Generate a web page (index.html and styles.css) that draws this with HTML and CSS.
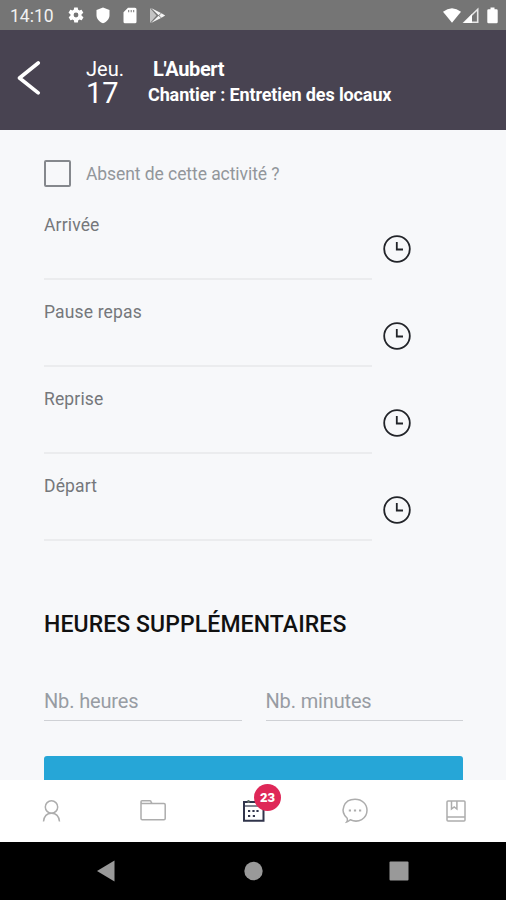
FILE: index.html
```html
<!DOCTYPE html>
<html lang="fr">
<head>
  <meta charset="UTF-8">
  <meta name="viewport" content="width=device-width, initial-scale=1.0">
  <title>Chantier : Entretien des locaux</title>
  <link rel="stylesheet" href="styles.css">
</head>
<body>
  <!-- Status bar -->
  <div class="status-bar">
    <span class="status-time">14:10</span>
    <svg class="status-gear" width="18" height="18" viewBox="0 0 24 24"><path fill="#fff" fill-rule="evenodd" d="M19.4 13a7.500 7.500 0 0 0 0-2l2.100-1.600c.2-.2.2-.4.1-.7l-2-3.400c-.1-.2-.4-.3-.6-.2l-2.500 1a7.300 7.300 0 0 0-1.700-1l-.4-2.600c0-.3-.2-.5-.5-.5h-4c-.2 0-.4.2-.5.500l-.4 2.600c-.6.300-1.200.6-1.700 1l-2.500-1c-.2-.1-.5 0-.6.200l-2 3.400c-.1.300 0 .5.100.7L4.600 11a7.500 7.500 0 0 0 0 2l-2.100 1.600c-.2.200-.2.400-.1.700l2 3.400c.1.200.4.300.6.200l2.500-1c.5.400 1.100.7 1.700 1l.4 2.600c.1.300.3.500.5.500h4c.3 0 .5-.2.5-.5l.4-2.600c.6-.3 1.200-.6 1.700-1l2.500 1c.2.100.5 0 .6-.2l2-3.400c.1-.3.100-.5-.1-.7zM12 15.200a3.200 3.200 0 1 1 0-6.400 3.200 3.200 0 0 1 0 6.400z"/></svg>
    <svg class="status-shield" width="14" height="17" viewBox="0 0 14 17"><path fill="#fff" d="M7 .5l6.500 2.400v5c0 3.800-2.700 7-6.500 8.300C3.200 14.900.5 11.700.5 7.900v-5z"/></svg>
    <svg class="status-card" width="14" height="17" viewBox="0 0 14 17"><path fill="#fff" fill-rule="evenodd" d="M5 .8h7q1.500 0 1.500 1.500v12.400q0 1.500-1.500 1.500H2Q.5 16.200.5 14.700V5.300zM5.200 3v2.200h1V3zm2.500 0v2.200h1V3zm2.500 0v2.200h1V3z"/></svg>
    <svg class="status-play" width="17" height="17" viewBox="0 0 17 17"><path fill="#c4c4c4" d="M1 1v15l6.500-7.500z"/><path fill="#f4f4f4" d="M2 1l10 5-2.500 2.200zM2 16l10-5-2.500-2.200zM12.500 6.300L16.200 8.500l-3.700 2.200-2.300-2.200z"/></svg>
    <div class="status-right">
      <svg width="20" height="17" viewBox="0 0 20 17"><path fill="#fff" d="M1 4.800Q10-2.500 19 4.800l-9 11z"/></svg>
      <svg width="18" height="17" viewBox="0 0 18 17"><path fill="none" stroke="#e8e8e8" stroke-width="1.600" d="M15.700 2.300v12.900H2.500z"/><path fill="#fff" d="M1.500 16L10 7V16z"/></svg>
      <svg class="status-battery" width="11" height="17" viewBox="0 0 11 17"><path fill="#fff" d="M3.500.5h4v1.800h2q1.200 0 1.200 1.200v11.600q0 1.200-1.200 1.200h-8Q.3 16.300.3 15.100V3.500q0-1.200 1.200-1.200h2z"/></svg>
    </div>
  </div>

  <!-- Header -->
  <header class="header">
    <a class="back" href="#" aria-label="Retour">
      <svg width="24" height="36" viewBox="0 0 24 36"><path d="M21.200 3L2.500 18l18.700 14.800" fill="none" stroke="#fff" stroke-width="3.600" stroke-linecap="round" stroke-linejoin="round"/></svg>
    </a>
    <div class="date">
      <span class="date-day">Jeu.</span>
      <span class="date-number">17</span>
    </div>
    <div class="site">
      <h1 class="site-name">L'Aubert</h1>
      <p class="site-task">Chantier : Entretien des locaux</p>
    </div>
  </header>

  <!-- Form -->
  <main class="content">
    <label class="absent">
      <input type="checkbox" class="absent-box">
      <span>Absent de cette activité ?</span>
    </label>

    <div class="time-row">
      <div class="time-field">Arrivée</div>
      <svg class="clock" width="30" height="30" viewBox="0 0 30 30"><circle cx="15" cy="15" r="12.800"/><path d="M14.800 8v7.500H21"/></svg>
    </div>
    <div class="time-row">
      <div class="time-field">Pause repas</div>
      <svg class="clock" width="30" height="30" viewBox="0 0 30 30"><circle cx="15" cy="15" r="12.800"/><path d="M14.800 8v7.500H21"/></svg>
    </div>
    <div class="time-row">
      <div class="time-field">Reprise</div>
      <svg class="clock" width="30" height="30" viewBox="0 0 30 30"><circle cx="15" cy="15" r="12.800"/><path d="M14.800 8v7.500H21"/></svg>
    </div>
    <div class="time-row">
      <div class="time-field">Départ</div>
      <svg class="clock" width="30" height="30" viewBox="0 0 30 30"><circle cx="15" cy="15" r="12.800"/><path d="M14.800 8v7.500H21"/></svg>
    </div>

    <h2 class="section-title">HEURES SUPPLÉMENTAIRES</h2>
    <div class="extra">
      <input class="extra-input" type="text" placeholder="Nb. heures">
      <input class="extra-input" type="text" placeholder="Nb. minutes">
    </div>
    <button class="submit" aria-label="Valider"></button>
  </main>

  <!-- Tabs -->
  <nav class="tabs">
    <a class="tab" href="#" aria-label="Profil">
      <svg width="30" height="30" viewBox="0 0 30 30"><circle cx="14.500" cy="11" r="6.200"/><path d="M6.500 25.500c.5-5 3.500-8.300 8-8.300s7.500 3.300 8 8.300"/></svg>
    </a>
    <a class="tab" href="#" aria-label="Dossiers">
      <svg width="30" height="30" viewBox="0 0 30 30"><path d="M3 8V5.800q0-1 1-1h8q1 0 1 1l1 1.700h12q1.200 0 1.200 1.200v13.800q0 1.200-1.200 1.200H4.200Q3 23.700 3 22.500V8q0-.5 1-.5h10"/></svg>
    </a>
    <a class="tab tab-active" href="#" aria-label="Planning">
      <svg width="30" height="30" viewBox="0 0 30 30"><path d="M5 6h19.500v18.800H5z"/><path d="M5 10h19.500" stroke-width="1.200"/><path d="M9.500 4v3M20.500 4v3" stroke="#65716d"/><path d="M9 15h2.200m2.200 0h2.200m1.800 0h2.200M9 20h2.200m2.600 0H16" stroke-width="2"/></svg>
      <span class="badge">23</span>
    </a>
    <a class="tab" href="#" aria-label="Messages">
      <svg width="30" height="30" viewBox="0 0 30 30"><path d="M7.200 22.200C-.5 15.500 3.500 3.300 15 3.300c7.200 0 12 4.900 12 11 0 8.300-8.500 13.200-16.700 9.500-.9.900-2.100 1.900-3.600 2.200.8-1 1-2.300.5-3.800z"/><path d="M8.800 14.500H11m2.900 0h2.200m2.900 0h2.200" stroke-width="1.800"/></svg>
    </a>
    <a class="tab" href="#" aria-label="Journal">
      <svg width="30" height="30" viewBox="0 0 30 30"><rect x="6" y="5" width="18" height="20" rx="1"/><path d="M6 21h18M10.500 5v8l2.700-2 2.700 2V5"/></svg>
    </a>
  </nav>

  <!-- System navigation -->
  <div class="system-nav">
    <svg width="20" height="24" viewBox="0 0 20 24"><path d="M17.500 1.500v21L0 12z"/></svg>
    <svg width="20" height="24" viewBox="0 0 20 24"><circle cx="10.500" cy="12" r="9.200"/></svg>
    <svg width="20" height="24" viewBox="0 0 20 24"><rect x=".5" y="2.500" width="19" height="19" rx="1"/></svg>
  </div>
</body>
</html>
```
FILE: styles.css
```css
* {
  box-sizing: border-box;
}

body {
  margin: 0;
  width: 506px;
  height: 900px;
  display: flex;
  flex-direction: column;
  overflow: hidden;
  background-color: #f7f8fa;
  font-family: Roboto, "Liberation Sans", sans-serif;
}

.status-bar {
  height: 30px;
  flex: none;
  display: flex;
  align-items: center;
  padding: 0 8px 0 10px;
  background-color: #757575;
  color: #f1f1f1;
}

.status-time {
  width: 57px;
  padding-top: 1px;
  font-size: 17.5px;
}

.status-shield {
  margin-left: 11px;
}

.status-card {
  margin-left: 13px;
}

.status-play {
  margin-left: 12px;
}

.status-right {
  display: flex;
  align-items: center;
  margin-left: auto;
}

.status-battery {
  margin-left: 7px;
}

.header {
  height: 100px;
  flex: none;
  display: flex;
  background-color: #484351;
  color: #fff;
}

.back {
  width: 86px;
  padding: 30px 0 0 17px;
}

.date {
  width: 62px;
  padding-top: 27px;
}

.date-day,
.date-number {
  display: block;
}

.date-day {
  font-size: 20px;
  line-height: 24px;
}

.date-number {
  font-size: 29px;
  line-height: 24px;
}

.site {
  padding-top: 27px;
}

.site-name {
  margin: 0 0 0 5px;
  font-size: 20px;
  line-height: 24px;
  font-weight: 700;
  letter-spacing: -0.35px;
}

.site-task {
  margin: 2px 0 0;
  font-size: 18px;
  line-height: 24px;
  font-weight: 700;
  letter-spacing: -0.12px;
}

.content {
  flex: 1;
  min-height: 0;
  overflow: hidden;
  padding: 29px 43px 0 44px;
}

.absent {
  display: flex;
  align-items: center;
  height: 28px;
  color: #92969b;
  font-size: 17.5px;
  letter-spacing: -0.07px;
}

.absent span {
  padding-top: 1px;
}

.absent-box {
  appearance: none;
  width: 27px;
  height: 27px;
  margin: 0 15px 0 0;
  border: 2px solid #85888d;
  border-radius: 2px;
}

.time-row {
  display: flex;
  height: 87px;
}

.absent + .time-row {
  margin-top: 6px;
}

.time-field {
  width: 328px;
  padding-top: 21px;
  border-bottom: 2px solid #ebecee;
  color: #75777b;
  font-size: 17.5px;
  line-height: 22px;
  letter-spacing: 0.15px;
}

.clock {
  margin: 41px 0 0 10px;
  fill: none;
  stroke: #222429;
  stroke-width: 1.8;
}

.section-title {
  margin: 70px 0 0;
  color: #111;
  font-size: 23px;
  line-height: 28px;
  font-weight: 500;
  letter-spacing: 0.09px;
}

.extra {
  display: flex;
  gap: 24px;
  margin-top: 45px;
}

.extra-input {
  width: 197.5px;
  height: 37px;
  padding: 0 0 2px;
  border: none;
  border-bottom: 1px solid #cfd1d5;
  background: none;
  font: 20px Roboto, "Liberation Sans", sans-serif;
  letter-spacing: -0.15px;
}

.extra-input::placeholder {
  color: #989ca3;
}

.submit {
  display: block;
  width: 100%;
  height: 54px;
  margin-top: 35px;
  border: none;
  border-radius: 3px;
  background-color: #26a6d7;
}

.tabs {
  height: 62px;
  flex: none;
  display: flex;
  padding-left: 1px;
  background-color: #fff;
}

.tab {
  position: relative;
  flex: 1;
  display: flex;
  align-items: center;
  justify-content: center;
}

.tab svg {
  fill: none;
  stroke: #adadad;
  stroke-width: 1.5;
}

.tab-active svg {
  stroke: #30344b;
  stroke-width: 2;
}

.badge {
  position: absolute;
  top: 4px;
  left: 51px;
  width: 27px;
  height: 27px;
  border-radius: 50%;
  background-color: #df2858;
  color: #fff;
  font-size: 13px;
  line-height: 28px;
  font-weight: 900;
  text-align: center;
}

.system-nav {
  height: 58px;
  flex: none;
  display: flex;
  align-items: center;
  justify-content: center;
  gap: 126px;
  background-color: #000;
}

.system-nav svg {
  fill: #999;
}
```
